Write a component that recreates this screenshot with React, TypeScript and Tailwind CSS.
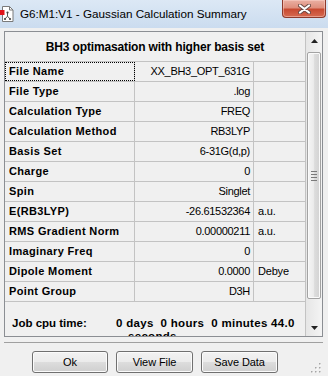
const rows: { label: string; value: string; unit?: string }[] = [
  { label: 'File Name', value: 'XX_BH3_OPT_631G' },
  { label: 'File Type', value: '.log' },
  { label: 'Calculation Type', value: 'FREQ' },
  { label: 'Calculation Method', value: 'RB3LYP' },
  { label: 'Basis Set', value: '6-31G(d,p)' },
  { label: 'Charge', value: '0' },
  { label: 'Spin', value: 'Singlet' },
  { label: 'E(RB3LYP)', value: '-26.61532364', unit: 'a.u.' },
  { label: 'RMS Gradient Norm', value: '0.00000211', unit: 'a.u.' },
  { label: 'Imaginary Freq', value: '0' },
  { label: 'Dipole Moment', value: '0.0000', unit: 'Debye' },
  { label: 'Point Group', value: 'D3H' },
]

function AppIcon() {
  return (
    <svg width="15" height="16" viewBox="0 0 15 16" className="shrink-0">
      <path d="M2.5 0.5h7l3.5 3.5v11.5h-10.5z" fill="#fff" stroke="#7a7a7a" />
      <path d="M9.5 0.5v3.5h3.5" fill="none" stroke="#7a7a7a" />
      <rect x="0" y="4" width="4.5" height="5" fill="#e0141b" />
      <path d="M7.5 7v3.2M7.5 10.2l-2.3 2.5M7.5 10.2l2.3 2.5" stroke="#555" strokeWidth="1" />
      <circle cx="7.5" cy="6.6" r="1.1" fill="#444" />
      <circle cx="5" cy="13" r="1.1" fill="#444" />
      <circle cx="10" cy="13" r="1.1" fill="#444" />
    </svg>
  )
}

function CloseButton() {
  return (
    <div className="mr-[2px] flex h-[18px] w-[44px] shrink-0 items-center justify-center self-start rounded-b-[4px] border border-t-0 border-[#8d3a2c] bg-[linear-gradient(#eab0a3_0%,#df8f7d_45%,#c84a31_55%,#d66a50_100%)] shadow-[inset_0_0_0_1px_rgba(255,220,210,0.45)]">
      <svg width="13" height="10" viewBox="0 0 13 10">
        <path d="M2 1.5l9 7M11 1.5l-9 7" stroke="#6b4a44" strokeWidth="4" strokeLinecap="round" />
        <path d="M2 1.5l9 7M11 1.5l-9 7" stroke="#fff" strokeWidth="2.2" strokeLinecap="round" />
      </svg>
    </div>
  )
}

function Arrow({ up }: { up?: boolean }) {
  return (
    <svg width="7" height="4" viewBox="0 0 7 4">
      <path d={up ? 'M0 4L3.5 0L7 4z' : 'M0 0L3.5 4L7 0z'} fill="#222" />
    </svg>
  )
}

function ScrollBar() {
  return (
    <div className="flex w-[17px] shrink-0 flex-col border-l border-[#c3c3c3] bg-[linear-gradient(90deg,#e6e6e6,#f4f4f4)]">
      <div className="flex h-[17px] items-center justify-center">
        <Arrow up />
      </div>
      <div className="mx-[1px] mt-[3px] flex h-[247px] flex-col items-center justify-center gap-[2px] rounded-[2px] border border-[#a3a3a3] bg-[linear-gradient(90deg,#f4f4f4_0%,#ececec_45%,#dcdcdc_55%,#d2d2d2_100%)] shadow-[inset_0_0_0_1px_#fafafa]">
        <div className="h-px w-[6px] bg-[#7a7a7a]" />
        <div className="h-px w-[6px] bg-[#7a7a7a]" />
        <div className="h-px w-[6px] bg-[#7a7a7a]" />
        <div className="h-px w-[6px] bg-[#7a7a7a]" />
      </div>
      <div className="flex-1" />
      <div className="flex h-[17px] items-center justify-center">
        <Arrow />
      </div>
    </div>
  )
}

function ResizeGrip() {
  const dots = [
    [8, 0],
    [4, 4],
    [8, 4],
    [0, 8],
    [4, 8],
    [8, 8],
  ]
  return (
    <svg width="10" height="10" viewBox="0 0 10 10" className="shrink-0">
      {dots.map(([x, y]) => (
        <g key={`${x}-${y}`}>
          <rect x={x + 1} y={y + 1} width="1.5" height="1.5" fill="#fff" />
          <rect x={x} y={y} width="1.5" height="1.5" fill="#a5a5a5" />
        </g>
      ))}
    </svg>
  )
}

function WinButton({ label, width }: { label: string; width: string }) {
  return (
    <button
      type="button"
      className={`flex h-[22px] ${width} items-center justify-center rounded-[3px] border border-[#707070] bg-[linear-gradient(#f2f2f2_0%,#ebebeb_50%,#dddddd_50%,#cfcfcf_100%)] text-[11px] tracking-[-0.1px] text-black shadow-[inset_0_0_0_1px_#fbfbfb]`}
    >
      {label}
    </button>
  )
}

export default function App() {
  return (
    <div className="relative h-[376px] w-[328px] overflow-hidden bg-[#f0f0f0] font-['Liberation_Sans',Arial,sans-serif] text-black">
      <div className="flex h-[28px] items-center bg-[linear-gradient(#dce8f5,#cbdcef)]">
        <AppIcon />
        <span className="ml-[5px] whitespace-nowrap text-[11.7px] text-black">G6:M1:V1 - Gaussian Calculation Summary</span>
        <div className="ml-auto self-start">
          <CloseButton />
        </div>
      </div>

      <div className="ml-[4px] mt-[3px] flex h-[306px] w-[319px] border border-[#8b8e93]">
        <div className="flex min-w-0 flex-1 flex-col overflow-hidden">
          <div className="flex h-[29px] shrink-0 items-center justify-center text-[12px] font-bold tracking-[-0.15px]">
            BH3 optimasation with higher basis set
          </div>
          {rows.map((row, i) => (
            <div
              key={row.label}
              className={`flex h-[20px] shrink-0 border-t border-[#c3c3c3] ${i === rows.length - 1 ? 'h-[21px] border-b' : ''}`}
            >
              <div
                className={`flex w-[130px] shrink-0 items-center border-r border-[#c3c3c3] pl-[4px] text-[11px] font-bold tracking-[0.35px] ${i === 0 ? 'outline-1 -outline-offset-1 outline-dotted outline-black' : ''}`}
              >
                {row.label}
              </div>
              <div className="flex w-[119px] shrink-0 items-center justify-end border-r border-[#c3c3c3] pr-[3px] text-[11px] tracking-[-0.3px]">
                {row.value}
              </div>
              <div className="flex flex-1 items-center pl-[4px] text-[11px] tracking-[-0.2px]">{row.unit}</div>
            </div>
          ))}
          <div className="flex shrink-0 pt-[15px] text-[11.5px] font-bold leading-[13px]">
            <div className="w-[111px] shrink-0 pl-[7px]">Job cpu time:</div>
            <div className="flex flex-col">
              <span className="whitespace-pre tracking-[0.3px]">0 days  0 hours  0 minutes 44.0</span>
              <span className="pl-[12px] tracking-[0.3px]">seconds</span>
            </div>
          </div>
        </div>
        <ScrollBar />
      </div>

      <div className="ml-[4px] mt-[5px] h-px w-[319px] bg-[#a0a0a0]" />

      <div className="mt-[8px] flex items-end pl-[32px] pr-[7px]">
        <div className="flex gap-[8px]">
          <WinButton label="Ok" width="w-[76px]" />
          <WinButton label="View File" width="w-[77px]" />
          <WinButton label="Save Data" width="w-[77px]" />
        </div>
        <div className="ml-auto">
          <ResizeGrip />
        </div>
      </div>
    </div>
  )
}
